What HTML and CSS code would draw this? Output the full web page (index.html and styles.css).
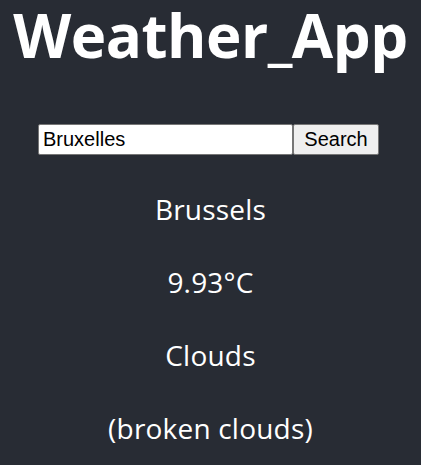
FILE: index.html
```html
<!DOCTYPE html>
<html>
<head>
<meta charset="utf-8">
<link rel="stylesheet" href="styles.css">
</head>
<body>
<div class="app">
  <h1 class="title">Weather_App</h1>
  <form class="search">
    <input class="search-input" type="text" value="Bruxelles">
    <button class="search-btn" type="button">Search</button>
  </form>
  <div class="results">
    <p class="line">Brussels</p>
    <p class="line">9.93°C</p>
    <p class="line">Clouds</p>
    <p class="line">(broken clouds)</p>
  </div>
</div>
</body>
</html>
```
FILE: styles.css
```css
html, body {
  margin: 0;
  padding: 0;
  background: #282c34;
}
.app {
  display: flex;
  flex-direction: column;
  align-items: center;
  color: #ffffff;
  font-family: "Open Sans", "Noto Sans", sans-serif;
  min-height: 465px;
}
.title {
  margin: 0;
  font-size: 60px;
  font-weight: 700;
  line-height: 70px;
  letter-spacing: -0.5px;
}
.search {
  display: flex;
  margin-top: 54px;
  margin-right: 4px;
}
.search-input {
  box-sizing: border-box;
  width: 255px;
  height: 31px;
  margin: 0;
  padding: 1px 4px;
  border: 1px solid #767676;
  border-radius: 2px;
  background: #fff;
  font-family: "Liberation Sans", Arial, sans-serif;
  font-size: 20px;
  color: #000;
}
.search-btn {
  box-sizing: border-box;
  width: 86px;
  height: 31px;
  margin: 0;
  padding: 0 6px;
  border: 1px solid #767676;
  border-radius: 2px;
  background: #efefef;
  font-family: "Liberation Sans", Arial, sans-serif;
  font-size: 20px;
  color: #000;
}
.results {
  display: flex;
  flex-direction: column;
  align-items: center;
  margin-top: 36px;
  gap: 36px;
}
.line {
  margin: 0;
  font-size: 28px;
  line-height: 37px;
  letter-spacing: 0.2px;
}
```
